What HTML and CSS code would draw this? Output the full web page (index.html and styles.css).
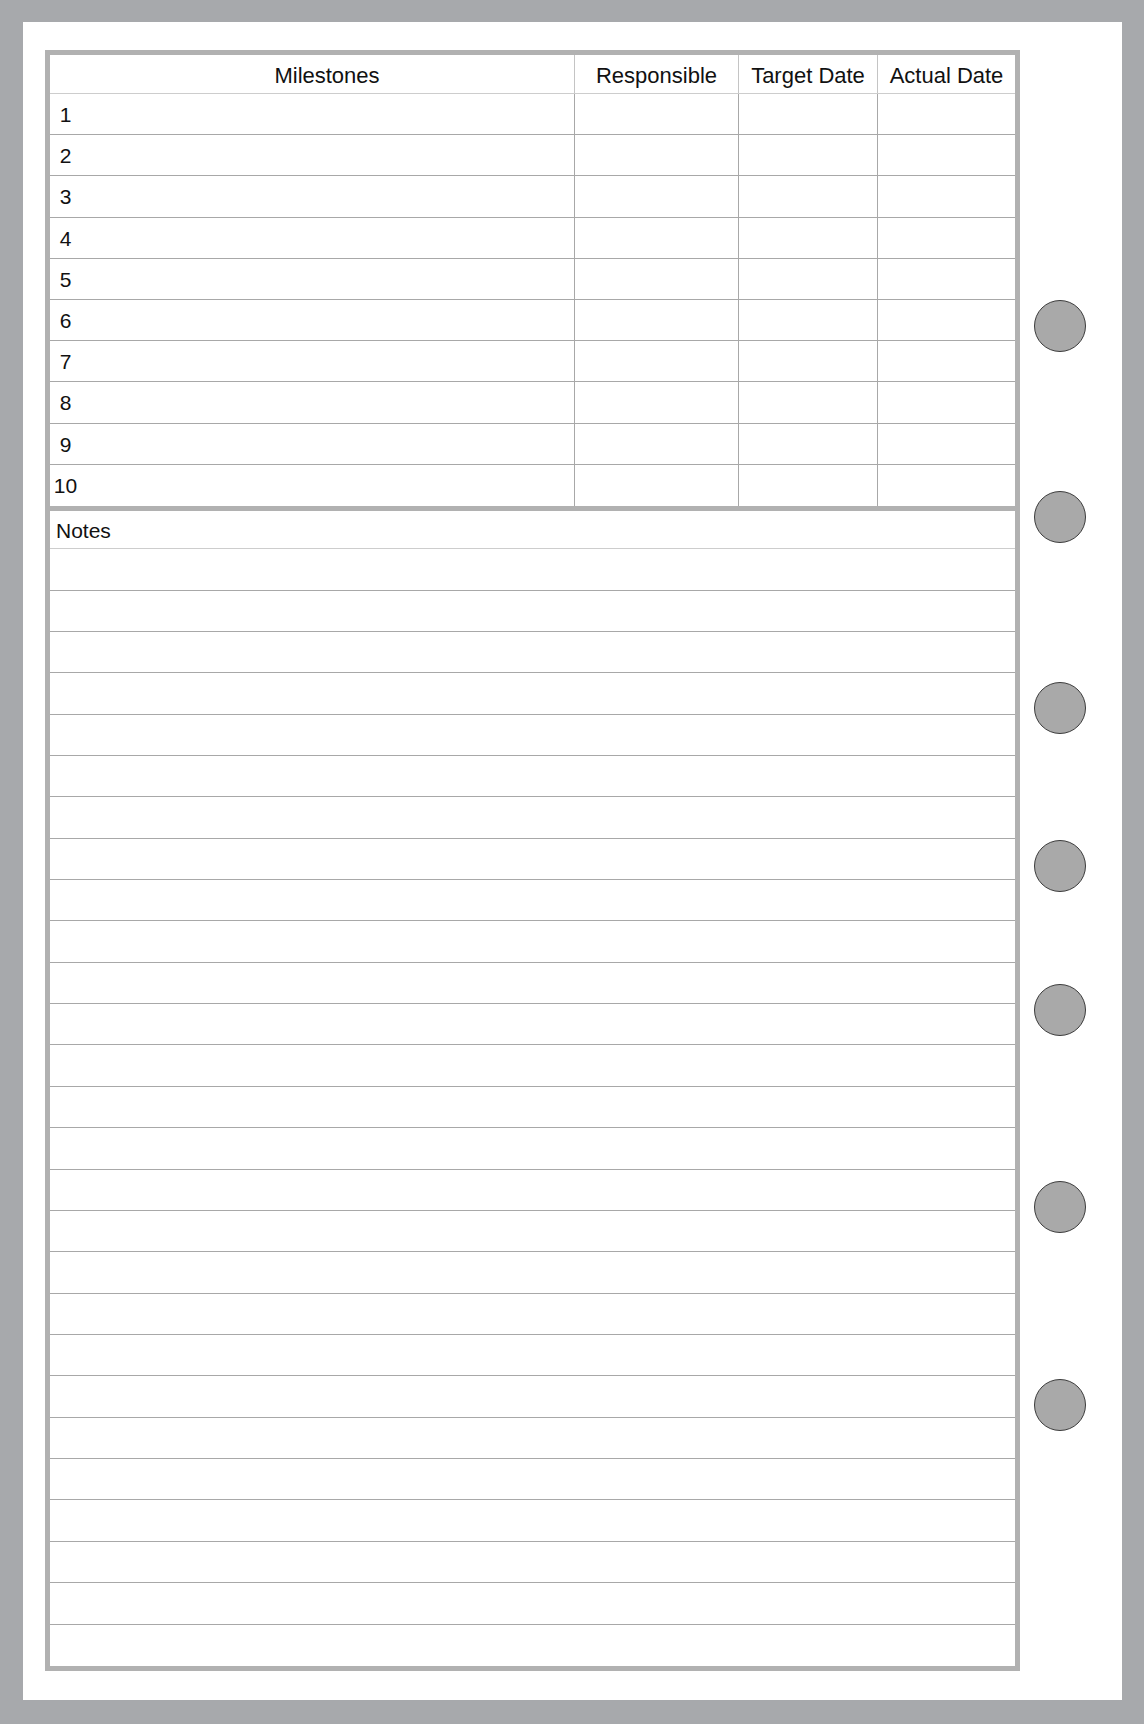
FILE: index.html
```html
<!DOCTYPE html>
<html lang="en">
<head>
    <meta charset="UTF-8">
    <title>Milestones</title>
    <link rel="stylesheet" href="styles.css">
</head>
<body>
    <div class="page">
        <div class="sheet">
            <div class="milestones">
                <div class="row head">
                    <div class="cell c-name">Milestones</div>
                    <div class="cell">Responsible</div>
                    <div class="cell">Target Date</div>
                    <div class="cell">Actual Date</div>
                </div>
                <div class="row"><div class="cell"><span class="num">1</span></div><div class="cell"></div><div class="cell"></div><div class="cell"></div></div>
                <div class="row"><div class="cell"><span class="num">2</span></div><div class="cell"></div><div class="cell"></div><div class="cell"></div></div>
                <div class="row"><div class="cell"><span class="num">3</span></div><div class="cell"></div><div class="cell"></div><div class="cell"></div></div>
                <div class="row"><div class="cell"><span class="num">4</span></div><div class="cell"></div><div class="cell"></div><div class="cell"></div></div>
                <div class="row"><div class="cell"><span class="num">5</span></div><div class="cell"></div><div class="cell"></div><div class="cell"></div></div>
                <div class="row"><div class="cell"><span class="num">6</span></div><div class="cell"></div><div class="cell"></div><div class="cell"></div></div>
                <div class="row"><div class="cell"><span class="num">7</span></div><div class="cell"></div><div class="cell"></div><div class="cell"></div></div>
                <div class="row"><div class="cell"><span class="num">8</span></div><div class="cell"></div><div class="cell"></div><div class="cell"></div></div>
                <div class="row"><div class="cell"><span class="num">9</span></div><div class="cell"></div><div class="cell"></div><div class="cell"></div></div>
                <div class="row"><div class="cell"><span class="num">10</span></div><div class="cell"></div><div class="cell"></div><div class="cell"></div></div>
            </div>

            <div class="notes">
                <div class="notes-head">Notes</div>
                <div class="line"></div>
                <div class="line"></div>
                <div class="line"></div>
                <div class="line"></div>
                <div class="line"></div>
                <div class="line"></div>
                <div class="line"></div>
                <div class="line"></div>
                <div class="line"></div>
                <div class="line"></div>
                <div class="line"></div>
                <div class="line"></div>
                <div class="line"></div>
                <div class="line"></div>
                <div class="line"></div>
                <div class="line"></div>
                <div class="line"></div>
                <div class="line"></div>
                <div class="line"></div>
                <div class="line"></div>
                <div class="line"></div>
                <div class="line"></div>
                <div class="line"></div>
                <div class="line"></div>
                <div class="line"></div>
                <div class="line"></div>
                <div class="line"></div>
            </div>
        </div>

        <!-- binder holes -->
        <div class="holes">
            <span class="hole"></span>
            <span class="hole"></span>
            <span class="hole"></span>
            <span class="hole"></span>
            <span class="hole"></span>
            <span class="hole"></span>
            <span class="hole"></span>
        </div>
    </div>
</body>
</html>
```

FILE: styles.css
```css
:root {
    --frame: #a7a9ac;
    --edge: #b1b1b1;
    --rule: #a8a8a8;
    --ink: #111;
}

body {
    margin: 0;
    font-family: 'Liberation Sans', Arial, Helvetica, sans-serif;
    color: var(--ink);
    background: #fff;
}

.page {
    width: 1144px;
    height: 1724px;
    box-sizing: border-box;
    border-style: solid;
    border-color: var(--frame);
    border-width: 22px 22px 24px 23px;
    padding: 28px 0 0 22px;
    display: flex;
    align-items: flex-start;
    background: #fff;
}

.sheet {
    width: 975px;
    box-sizing: border-box;
    border: 5px solid var(--edge);
}

.milestones {
    border-bottom: 5px solid var(--edge);
}

.row {
    display: grid;
    grid-template-columns: 524px 164px 139px 1fr;
    height: 41.2px;
    box-sizing: border-box;
    border-bottom: 1px solid var(--rule);
}

.row:last-child {
    border-bottom: none;
}

.cell {
    display: flex;
    align-items: center;
    padding-top: 2px;
}

.cell + .cell {
    border-left: 1px solid var(--rule);
}

.head {
    height: 39px;
    border-bottom-color: #cdcdcd;
}

.head .cell {
    justify-content: center;
    font-size: 22px;
    padding-top: 4px;
}

.head .cell + .cell {
    border-left-color: #c4c4c4;
}

.head .c-name {
    padding-left: 30px;
}

.num {
    display: inline-block;
    width: 31px;
    text-align: center;
    font-size: 21px;
}

.notes-head {
    height: 38.3px;
    line-height: 40px;
    box-sizing: border-box;
    padding-left: 6px;
    font-size: 21px;
    border-bottom: 1px solid #cdcdcd;
}

.line {
    height: 41.37px;
    box-sizing: border-box;
    border-bottom: 1px solid var(--rule);
}

.line:last-child {
    border-bottom: none;
}

.holes {
    display: flex;
    flex-direction: column;
    margin-left: 14px;
    padding-top: 249.6px;
}

.hole {
    width: 52px;
    height: 52px;
    box-sizing: border-box;
    border-radius: 50%;
    border: 1.5px solid #3c3c3c;
    background: #a9a9a9;
}

.hole:nth-child(2) { margin-top: 139.4px; }
.hole:nth-child(3) { margin-top: 139.4px; }
.hole:nth-child(4) { margin-top: 105.3px; }
.hole:nth-child(5) { margin-top: 92.1px; }
.hole:nth-child(6) { margin-top: 144.9px; }
.hole:nth-child(7) { margin-top: 146px; }
```
